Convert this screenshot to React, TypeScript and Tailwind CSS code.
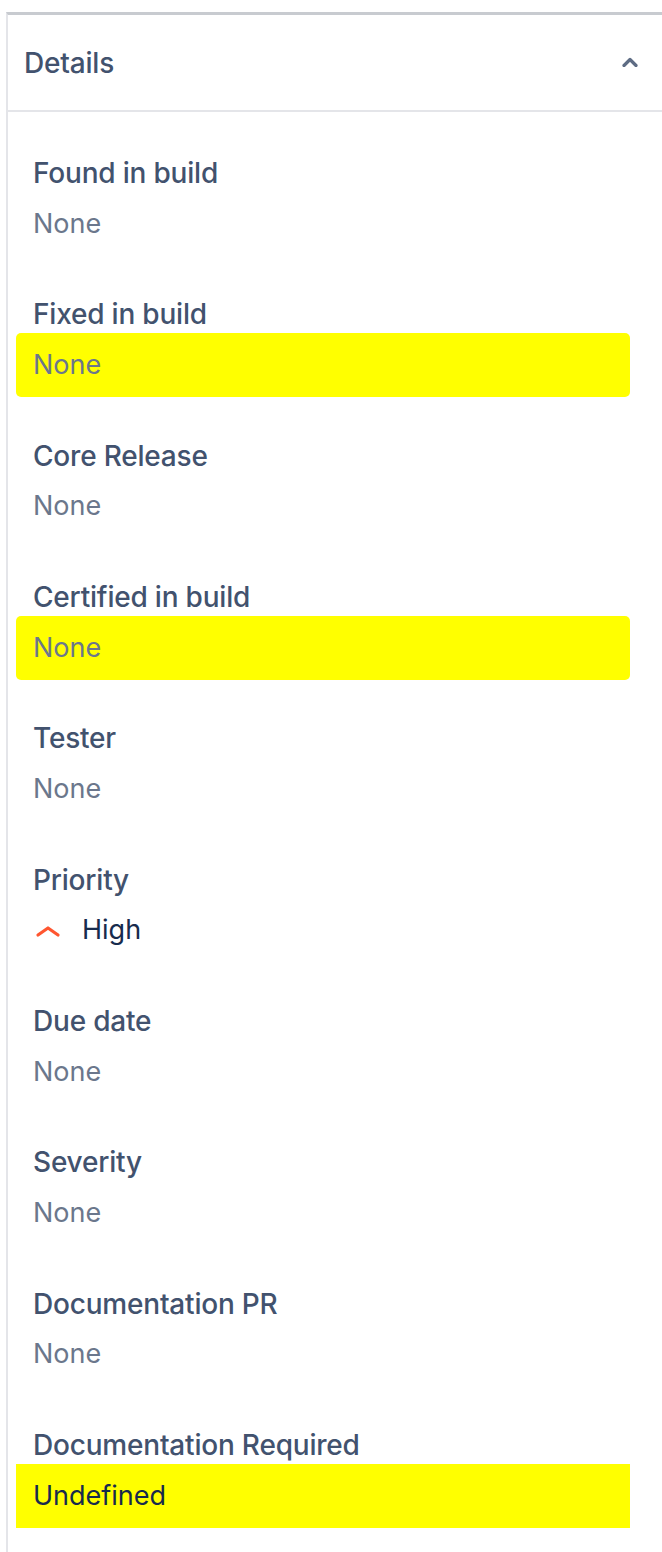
import React from "react";

type Field = { label: string; value: string; highlight?: boolean; square?: boolean; dark?: boolean; priority?: boolean };

const fields: Field[] = [
  { label: "Found in build", value: "None" },
  { label: "Fixed in build", value: "None", highlight: true },
  { label: "Core Release", value: "None" },
  { label: "Certified in build", value: "None", highlight: true },
  { label: "Tester", value: "None" },
  { label: "Priority", value: "High", priority: true },
  { label: "Due date", value: "None" },
  { label: "Severity", value: "None" },
  { label: "Documentation PR", value: "None" },
  { label: "Documentation Required", value: "Undefined", highlight: true, square: true, dark: true },
];

export default function App() {
  return (
    <div
      className="min-h-[1552px] w-[662px] bg-white flex flex-col pt-[12px] pl-[6px] overflow-hidden"
      style={{ fontFamily: 'Inter, "Noto Sans", sans-serif' }}
    >
      <div className="flex-1 flex flex-col border-l-2 border-t-[3px] border-l-[#E4E5E9] border-t-[#C8CBD0]">
        <div className="h-[97px] flex items-center justify-between pl-[16px] pr-[24px] border-b-2 border-[#E4E5E9]">
          <span className="text-[28px] font-medium text-[#42526E] tracking-[-0.2px]">Details</span>
          <svg width="16" height="10" viewBox="0 0 16 10" className="mb-[2px]">
            <path d="M2 8.5 L8 2.5 L14 8.5" fill="none" stroke="#5E6C84" strokeWidth="3.2" strokeLinecap="round" strokeLinejoin="round" />
          </svg>
        </div>
        <div className="flex flex-col pt-[42px] gap-y-[39.33px]">
          {fields.map((f) => (
            <div key={f.label} className="flex flex-col">
              <div className="h-[38px] flex items-center pl-[25px] text-[28px] font-medium text-[#42526E] tracking-[-0.2px]">
                {f.label}
              </div>
              <div
                className={
                  "ml-[8px] w-[614px] h-[64px] flex items-center pl-[17px] text-[27px] " +
                  (f.highlight ? "bg-[#FFFF00] " : "") +
                  (f.square ? "" : "rounded-[5px] ")
                }
              >
                {f.priority ? (
                  <div className="flex items-center">
                    <svg width="26" height="14" viewBox="0 0 26 14" className="ml-[2px] mr-[21px]">
                      <path d="M3 11 L13 4 L23 11" fill="none" stroke="#FF5630" strokeWidth="3.2" strokeLinecap="round" strokeLinejoin="round" />
                    </svg>
                    <span className="text-[#172B4D]">{f.value}</span>
                  </div>
                ) : (
                  <span className={f.dark ? "text-[#172B4D]" : "text-[#6B778C]"}>{f.value}</span>
                )}
              </div>
            </div>
          ))}
        </div>
      </div>
    </div>
  );
}
